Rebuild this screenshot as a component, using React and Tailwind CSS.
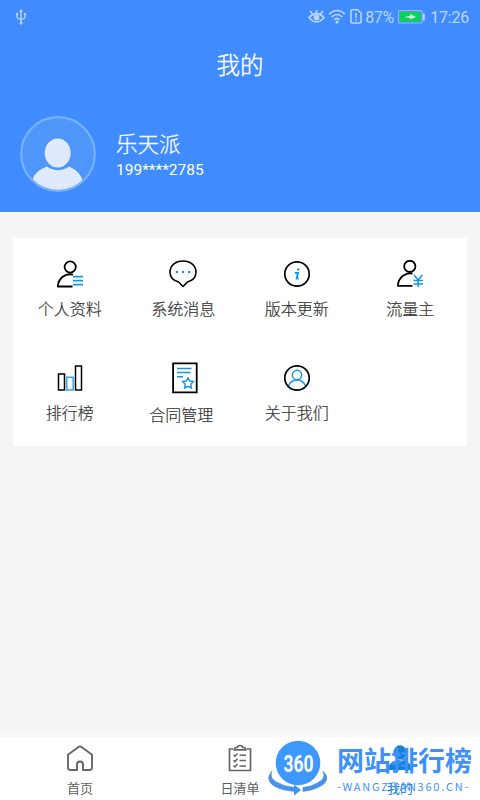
import React from 'react';

const UsbIcon = () => (
  <svg width="12" height="16" viewBox="0 0 12 16" fill="none" stroke="currentColor" strokeWidth="1.3">
    <path d="M6 2v12M2 5v2.5q0 2 4 3.2M10 5v2.5q0 2-4 3.2" />
    <path d="M6 0 8 3H4z" fill="currentColor" stroke="none" />
    <circle cx="6" cy="14" r="1.5" fill="currentColor" stroke="none" />
    <circle cx="2" cy="5" r="1.2" fill="currentColor" stroke="none" />
    <path d="M9 4h2v2H9z" fill="currentColor" stroke="none" />
  </svg>
);

const EyeIcon = () => (
  <svg width="17" height="16" viewBox="0 0 17 16" fill="none" stroke="currentColor" strokeWidth="1.7">
    <path d="M1 8.500Q8.500 1 16 8.500Q8.500 17.500 1 8.500z" />
    <circle cx="8.500" cy="8.600" r="2.900" fill="currentColor" stroke="none" />
    <path d="M8.500 4.500V1M4.500 5 2 2M12.500 5 15 2" />
  </svg>
);

const WifiIcon = () => (
  <svg width="18" height="15" viewBox="0 0 18 15" fill="none" stroke="currentColor" strokeWidth="1.6">
    <path d="M1 5.200Q9-2.200 17 5.200M3.600 8Q9 3 14.400 8M6.200 10.700Q9 8 11.800 10.700" />
    <circle cx="9" cy="13" r="1.500" fill="currentColor" stroke="none" />
  </svg>
);

const SimIcon = () => (
  <svg width="12" height="15" viewBox="0 0 12 15" fill="none" stroke="currentColor" strokeWidth="1.5">
    <path d="M2 .8h5.500L11 4v9q0 1-1 1H2q-1 0-1-1V1.800q0-1 1-1z" />
    <path d="M6 4v4.700M6 10.200v1.600" />
  </svg>
);

const BatteryIcon = () => (
  <svg width="27" height="14" viewBox="0 0 27 14">
    <rect x=".6" y=".6" width="23.500" height="12.400" rx="1" fill="none" stroke="#8fbdff" strokeWidth="1.100" />
    <rect x="2" y="2" width="20.500" height="9.600" fill="#09d455" />
    <path d="M6 7.200 12 5.800 12 4l6 3-6 2.500.300-1.700z" fill="#d6ffe9" />
    <path d="M25 3.500h1.700v7H25z" fill="#c5dcff" />
  </svg>
);

const Avatar = () => (
  <svg width="76" height="76" viewBox="0 0 76 76">
    <defs>
      <clipPath id="avatar">
        <circle cx="38" cy="38" r="36.500" />
      </clipPath>
    </defs>
    <circle cx="38" cy="38" r="37" fill="#4f96fa" />
    <g clipPath="url(#avatar)" fill="#dfeafc">
      <ellipse cx="37.700" cy="37" rx="13" ry="14.500" />
      <path d="M12 65Q14 55 27 50.500Q38 58 49 50.500Q60 55 63 65L54 76H22z" />
    </g>
    <circle cx="38" cy="38" r="36.800" fill="none" stroke="#77b1ff" strokeWidth="2.200" />
  </svg>
);

const ProfileIcon = () => (
  <svg width="28" height="28" viewBox="0 0 28 28" fill="none" stroke="#000" strokeWidth="1.800">
    <circle cx="14.200" cy="7" r="5.600" />
    <path d="M17 14.600Q12 13.300 7 16.500Q2 20.500 1.800 26.500H16.500" strokeLinejoin="round" />
    <path d="M17 16.600h10M17 20.600h10M17 24.700h10" stroke="#1296db" />
  </svg>
);

const MessageIcon = () => (
  <svg width="28" height="28" viewBox="0 0 28 28" fill="none" stroke="#000" strokeWidth="1.600">
    <path d="M14 26.500 9.500 22Q1 19.500 1 12.200C1 5.500 6.500 1 14 1s13 4.500 13 11.200Q27 19.500 18.500 22z" strokeLinejoin="round" />
    <g fill="#1689dc" stroke="none">
      <circle cx="7.800" cy="12" r="1.200" />
      <circle cx="14" cy="12" r="1.200" />
      <circle cx="20.200" cy="12" r="1.200" />
    </g>
  </svg>
);

const VersionIcon = () => (
  <svg width="28" height="28" viewBox="0 0 28 28" fill="none" stroke="#000" strokeWidth="1.700">
    <circle cx="14" cy="14" r="12.200" />
    <circle cx="15.200" cy="9.500" r="1.200" fill="#1296f0" stroke="none" />
    <path d="M12 13h3l-1.300 5.500h2" stroke="#1296f0" strokeWidth="1.900" />
  </svg>
);

const TrafficIcon = () => (
  <svg width="28" height="28" viewBox="0 0 28 28" fill="none" stroke="#000" strokeWidth="1.800">
    <circle cx="13.800" cy="6.400" r="5.600" />
    <path d="M16.500 13.700Q12 12.500 7 15.700Q2 19.500 1.900 25.900H16.500" strokeLinejoin="round" />
    <path d="m18 15 4.200 5 4.200-5M22.200 20v7M17.500 20.500h9.500M17.500 24h9.500" stroke="#1296f0" strokeWidth="1.500" />
  </svg>
);

const RankIcon = () => (
  <svg width="28" height="28" viewBox="0 0 28 28" fill="none" strokeWidth="1.500">
    <path d="M2.500 10h6v16h-6zM19.500 2h6v24h-6z" stroke="#000" />
    <path d="M10.700 13.300h6.500V26h-6.500z" stroke="#35a5e8" />
  </svg>
);

const ContractIcon = () => (
  <svg width="26" height="32" viewBox="0 0 26 32" fill="none" stroke="#1b93df" strokeWidth="1.500">
    <path d="M1.100 1.300h23.600v29H1.100z" stroke="#000" strokeWidth="1.800" />
    <path d="M5 6.600h14.500M5 10.600h13.500M5 14.700h6" />
    <path d="m16 15.700 1.700 3.300 3.700.6-2.600 2.700.6 3.700-3.400-1.700-3.400 1.700.6-3.700-2.600-2.700 3.700-.6z" strokeWidth="1.400" />
  </svg>
);

const AboutIcon = () => (
  <svg width="28" height="28" viewBox="0 0 28 28" fill="none" stroke="#1296f0" strokeWidth="1.500">
    <circle cx="14" cy="11" r="4.700" />
    <path d="M5.500 22Q8 16 14 16t8.500 6" />
    <circle cx="14" cy="14" r="12.200" stroke="#000" strokeWidth="1.700" />
  </svg>
);

const HomeIcon = () => (
  <svg width="28" height="28" viewBox="0 0 28 28" fill="none" stroke="#666" strokeWidth="1.900" strokeLinejoin="round">
    <path d="M11 26H4.500Q2 26 2 23.500V10.800L12.500 3Q14 1.800 15.500 3L26 10.800V23.500Q26 26 23.500 26H17V20.500Q17 17.500 14 17.500T11 20.500z" />
  </svg>
);

const ListIcon = () => (
  <svg width="28" height="28" viewBox="0 0 28 28" fill="none" stroke="#666" strokeWidth="1.700">
    <path d="M7 5H3.500v21.500h21V5H21" />
    <path d="M8 5.800h12L18.500 3.500H17Q16 1.500 14 1.500T11 3.500H9.500z" strokeLinejoin="round" />
    <path d="m7.500 11 1.500 1.300L11.500 9.500M7.500 16.300 9 17.600l2.500-2.800M7.500 21.600 9 22.900l2.500-2.800M13.500 11.300H20M13.500 16.600H20M13.500 21.900H20" strokeWidth="1.500" />
  </svg>
);

const MineIcon = () => (
  <svg width="28" height="28" viewBox="0 0 28 28" fill="#1283d2">
    <ellipse cx="14" cy="8.500" rx="6.500" ry="7.200" />
    <path d="M2 26Q2.500 18.500 10 16.500q4 2 8 0Q25.500 18.500 26 26z" />
  </svg>
);

const menuItems = [
  { label: '个人资料', icon: ProfileIcon },
  { label: '系统消息', icon: MessageIcon },
  { label: '版本更新', icon: VersionIcon },
  { label: '流量主', icon: TrafficIcon },
  { label: '排行榜', icon: RankIcon },
  { label: '合同管理', icon: ContractIcon, large: true },
  { label: '关于我们', icon: AboutIcon }
];

const tabs = [
  { label: '首页', icon: HomeIcon },
  { label: '日清单', icon: ListIcon },
  { label: '我的', icon: MineIcon, active: true }
];

const StatusBar = () => (
  <div className="flex h-8 items-center pt-px pr-[11px] pl-[15px] text-[#bcd7ff]">
    <UsbIcon />
    <div className="ml-auto flex items-center">
      <EyeIcon />
      <span className="ml-[3px]"><WifiIcon /></span>
      <span className="ml-1"><SimIcon /></span>
      <span className="ml-[3px] w-[33px] pt-0.5 text-base tracking-[-0.3px]">87%</span>
      <BatteryIcon />
      <span className="ml-[5px] pt-0.5 text-base tracking-[-0.2px]">17:26</span>
    </div>
  </div>
);

const Watermark = () => (
  <div className="absolute right-0 bottom-0 flex h-[63px] w-[213px] text-[#3e91fb]">
    <svg width="62" height="63" viewBox="0 0 62 63" className="shrink-0">
      <circle cx="31" cy="26" r="22.300" fill="#3d98ff" />
      <path d="M5 34Q-3 43 8 49.500Q15 53.500 28 54.500V50.500Q17 49.500 9.500 45Q2 41 5 34zM56 34Q65 43 53 49.500Q46 53.500 36 54.500V50.500Q45 49.500 52 45Q59 41 56 34z" fill="#4791e8" stroke="#4791e8" strokeWidth=".6" />
      <path d="M27 47.500 34 53l-7 5.500z" fill="#4791e8" />
      <text x="31.500" y="34.500" textAnchor="middle" textLength="30" lengthAdjust="spacingAndGlyphs" fill="#fff" fontFamily="Roboto" fontWeight="700" fontSize="24">360</text>
    </svg>
    <div className="ml-[8px] pt-[9px] whitespace-nowrap">
      <div className="text-[27px] leading-[32px] font-bold">网站排行榜</div>
      <div className="mt-px font-['Noto_Sans_CJK_SC',sans-serif] text-[11px] leading-[14px] tracking-[1.75px]">-WANGZHAN360.CN-</div>
    </div>
  </div>
);

const App = () => {
  return (
    <div className="relative flex h-[800px] w-[480px] flex-col overflow-hidden bg-[#f5f5f5] font-[Roboto,'Noto_Sans_CJK_SC',sans-serif]">
      <header className="h-[212px] shrink-0 bg-[#408cff] text-white">
        <StatusBar />
        <h1 className="flex h-[66px] items-center justify-center pt-[3px] text-[23.500px] font-light [-webkit-text-stroke:0.35px]">我的</h1>
        <div className="flex pt-[18px] pl-5">
          <Avatar />
          <div className="ml-5 pt-[15px]">
            <div className="text-[21.500px] leading-7 font-light [-webkit-text-stroke:0.25px]">乐天派</div>
            <div className="text-[15.500px] leading-[22px]">199****2785</div>
          </div>
        </div>
      </header>

      <main className="flex-1 px-[13px] pt-[26px]">
        <div className="grid h-[208px] grid-cols-4 grid-rows-2 bg-white">
          {menuItems.map(({ label, icon: Icon, large }) => (
            <div key={label} className={large ? 'flex flex-col items-center pt-[19px]' : 'flex flex-col items-center pt-[22px]'}>
              <div className={large ? 'ml-[3px] h-[34px] pt-px' : 'h-7'}>
                <Icon />
              </div>
              <span className={large ? 'mt-[9px] mr-1 text-base leading-6 font-light text-[#333] [-webkit-text-stroke:0.2px]' : 'mt-[10px] text-base leading-6 font-light text-[#333] [-webkit-text-stroke:0.2px]'}>
                {label}
              </span>
            </div>
          ))}
        </div>
      </main>

      <div className="h-[7px] bg-[#f8f8f8]" />
      <nav className="grid h-[63px] grid-cols-3 bg-white">
        {tabs.map(({ label, icon: Icon, active }) => (
          <div key={label} className="flex flex-col items-center pt-[7px]">
            <Icon />
            <span className={active ? 'mt-[7px] text-[13px] leading-5 text-[#1283d2]' : 'mt-[7px] text-[13px] leading-5 font-light text-[#444] [-webkit-text-stroke:0.2px]'}>
              {label}
            </span>
          </div>
        ))}
      </nav>

      <Watermark />
    </div>
  );
};

export default App;
